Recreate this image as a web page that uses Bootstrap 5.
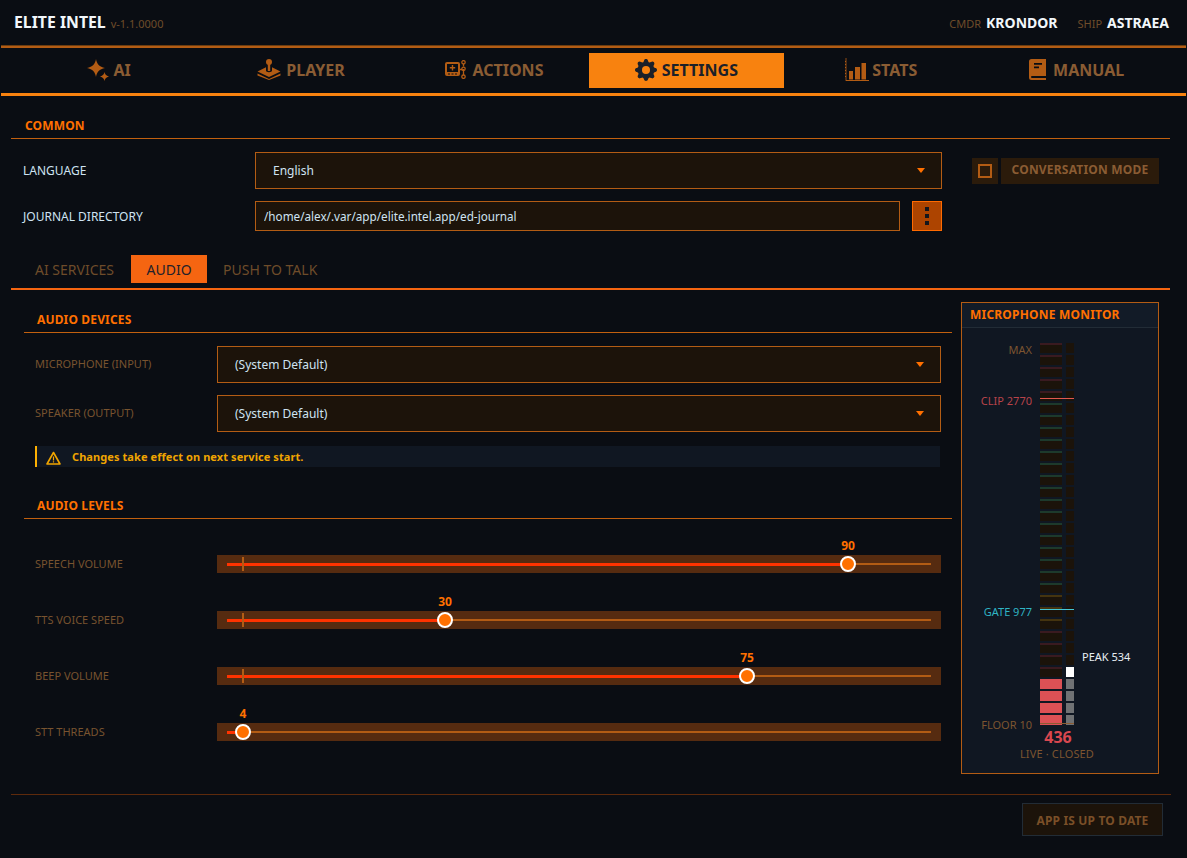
<!DOCTYPE html>
<html lang="en">
<head>
  <meta charset="UTF-8">
  <meta name="viewport" content="width=device-width, initial-scale=1.0">
  <title>Elite Intel</title>

  <!-- Bootstrap CSS -->
  <link href="https://cdn.jsdelivr.net/npm/bootstrap@5.3.0/dist/css/bootstrap.min.css" rel="stylesheet">

  <style>
    html, body { height: 100%; }
    body {
      background: #0a0d13;
      color: #cfe3f2;
      font-family: "Noto Sans", "Liberation Sans", sans-serif;
      font-size: 12px;
      padding: 0 1px;
      overflow: hidden;
    }

    /* top strip */
    .app-head { height: 46px; padding: 0 17px 0 13px; border-bottom: 1px solid #6b3c10; }
    .app-title { font-size: 15.8px; font-weight: 700; color: #f2f7fb; }
    .app-ver { font-size: 11px; color: #6e4c2a; margin-left: 5px; }
    .head-key { font-size: 11px; color: #6e4c2a; margin-right: 5px; }
    .head-val { font-size: 14px; font-weight: 700; color: #f2f7fb; }
    .head-gap { margin-left: 20px; }

    /* main tabs */
    .main-tabs {
      display: grid;
      grid-template-columns: repeat(6, 193.4px);
      padding: 5px 0 5px 10px;
      height: 50px;
      border-top: 2px solid #b35c14;
      border-bottom: 3px solid #f8820f;
    }
    .main-tab {
      display: flex; align-items: center; justify-content: center; gap: 5px;
      height: 35px;
      padding-bottom: 2px;
      font-size: 16px; font-weight: 700;
      color: #8a5c33;
    }
    .main-tab svg { fill: #b35c14; flex: none; }
    .main-tab.is-on { background: #f8820f; color: #1b2029; margin: 0 1px 0 -2px; }
    .main-tab.is-on svg { fill: #1b2029; }
    .tab-ai { padding-left: 2px; }
    .tab-actions { gap: 6px; }
    .tab-stats { gap: 3px; }
    .tab-manual { gap: 7px; padding-left: 4px; }

    /* section headings */
    .sect-head {
      font-size: 12px; font-weight: 700; color: #ff7000; letter-spacing: .15px;
      border-bottom: 1px solid #c2600f;
      line-height: 17px;
    }
    .common-head { margin: 21px 0 0 0; padding: 0 0 4px 14px; }
    .sub-head { margin-left: 13px; padding: 0 0 4px 13px; }

    .wrap-page { padding-left: 10px; padding-right: 16px; }

    .row-label { color: #cfe3f2; }
    .dim-label { font-size: 11px; color: #78532f; }

    .fld {
      background-color: #1c130a;
      border: 1px solid #b35c14;
      border-radius: 0;
      color: #cfe3f2;
      font-size: 12px;
      box-shadow: none;
    }
    select.fld {
      appearance: none;
      padding: 0 0 0 17px;
      background-image: url("data:image/svg+xml,%3Csvg xmlns='http://www.w3.org/2000/svg' width='10' height='6'%3E%3Cpath d='M1 0h8L5 5z' fill='%23ff7000'/%3E%3C/svg%3E");
      background-repeat: no-repeat;
      background-position: right 15px center;
      background-size: 10px 6px;
    }
    input.fld { padding: 0 8px; font-size: 11.7px; }
    input.fld:focus, select.fld:focus { background-color: #1c130a; color: #cfe3f2; border-color: #b35c14; box-shadow: none; outline: 0; }

    .common-row { margin-left: 12px; }
    .lang-row { margin-top: 13px; }
    .dir-row { margin-top: 12px; }
    .lang-select { width: 687px; height: 37px; }
    .dir-input { width: 645px; height: 30px; }
    .common-label { width: 232px; flex: none; }
    .label-down { padding-top: 2px; }
    .dots-btn {
      width: 30px; height: 30px; margin-left: 12px; padding: 0;
      background: #ad4400; border: 1px solid #ff6a00; border-radius: 0;
      display: flex; flex-direction: column; align-items: center; justify-content: center; gap: 3px;
    }
    .dots-btn i { width: 4px; height: 4px; background: #14161c; display: block; }
    .conv-check {
      width: 26px; height: 26px; margin-left: 30px; background: #2b1b0b;
      display: flex; align-items: center; justify-content: center;
    }
    .conv-check i { width: 14px; height: 14px; border: 2px solid #b35c14; display: block; }
    .conv-btn {
      width: 158px; height: 26px; margin-left: 3px; padding: 0 0 2px;
      background: #2b1b0b; border: 0; border-radius: 0;
      color: #8a5c33; font-size: 12px; font-weight: 700; letter-spacing: .2px;
    }

    /* sub tabs */
    .sub-tabs { height: 37px; margin-top: 22px; padding: 2px 0 5px 14px; border-bottom: 2px solid #f56511; }
    .sub-tab { height: 28px; padding: 0 10px; font-size: 14px; color: #6e4c2a; display: flex; align-items: center; margin-right: 7px; }
    .sub-tab.is-on { background: #f56511; color: #22212a; padding: 0 15.5px; margin-right: 6px; }

    .left-col { width: 941px; flex: none; }

    .dev-row { margin-left: 24px; width: 906px; }
    .dev-label { width: 182px; flex: none; }
    .dev-row select { height: 37px; }

    .warn-strip {
      margin-left: 24px; margin-top: 14px; width: 905px; height: 21px;
      background: #101722;
      border-left: 2px solid #fdb002;
      padding: 2px 0 0 9px;
      color: #f0a500; font-size: 11px; font-weight: 700; letter-spacing: .08px;
    }

    /* sliders */
    .lvl-row { margin-left: 24px; width: 906px; height: 18px; margin-bottom: 38px; }
    .lvl-band { position: relative; width: 724px; height: 18px; background: #562b10; }
    .lvl-track { position: absolute; left: 10px; right: 10px; top: 8px; height: 2px; background: #b35c14; }
    .lvl-fill { position: absolute; left: 10px; top: 8px; height: 3px; background: #ff3300; }
    .lvl-tick { position: absolute; left: 25px; top: 2px; width: 2px; height: 14px; background: #b35c14; }
    .lvl-thumb {
      position: absolute; top: 1px; width: 16px; height: 16px; margin-left: -8px;
      border-radius: 50%; background: #ff7000; border: 2px solid #fff;
    }
    .lvl-val {
      position: absolute; top: -17px; width: 30px; margin-left: -15px; text-align: center;
      font-size: 12px; font-weight: 700; color: #ff7000; line-height: 16px;
    }

    /* mic monitor */
    .mon-panel {
      width: 198px; height: 472px; margin-left: 9px; margin-top: 12px;
      background: #101722; border: 1px solid #b35c14;
    }
    .mon-head {
      height: 25px; padding-left: 8px; background: #121b27;
      border-bottom: 1px solid #222c36;
      font-size: 12px; font-weight: 700; color: #ff7000; letter-spacing: .2px;
      display: flex; align-items: center;
    }
    .mtr-wrap { position: relative; margin: 15px 0 0 78px; width: 34px; height: 382px; display: flex; flex-direction: column; gap: 2px; }
    .mtr-seg { display: flex; height: 10px; gap: 4px; }
    .mtr-a { width: 22px; background: #1b130a; border-top: 2px solid transparent; }
    .mtr-b { width: 8px; background: #1b130a; }
    .mtr-line { position: absolute; left: 0; width: 34px; height: 1px; }
    .mtr-lab { position: absolute; right: 42px; font-size: 11px; line-height: 14px; white-space: nowrap; }
    .mtr-peak { position: absolute; left: 42px; top: 307px; color: #e8eef2; font-size: 11px; line-height: 14px; white-space: nowrap; }
    .mon-num { padding-right: 4px; text-align: center; font-size: 16px; font-weight: 700; color: #d9474f; line-height: 20px; margin-top: 2px; }
    .mon-state { padding-right: 6px; text-align: center; font-size: 11px; letter-spacing: .15px; color: #7d5530; line-height: 14px; }

    /* foot */
    .foot-line { border-top: 1px solid #5e2a0c; margin: 15px -1px 0 0; }
    .upd-btn {
      width: 141px; height: 33px; padding: 2px 0 0; margin: 8px 7px 0 0;
      background: #1c130a; border: 1px solid #222c36; border-radius: 0;
      color: #7a4f28; font-size: 12px; font-weight: 700; letter-spacing: .15px;
    }
  </style>
</head>
<body>

  <!-- Title strip -->
  <header class="app-head d-flex align-items-center justify-content-between">
    <div class="d-flex align-items-baseline">
      <span class="app-title">ELITE INTEL</span>
      <span class="app-ver">v-1.1.0000</span>
    </div>
    <div class="d-flex align-items-baseline">
      <span class="head-key">CMDR</span><span class="head-val">KRONDOR</span>
      <span class="head-key head-gap">SHIP</span><span class="head-val">ASTRAEA</span>
    </div>
  </header>

  <!-- Main tabs -->
  <nav class="main-tabs">
    <div class="main-tab tab-ai">
      <svg width="22" height="22" viewBox="0 0 22 22"><path d="M9 0c.8 5 3.4 7.7 9 9-5.6 1.3-8.2 4-9 9-.8-5-3.4-7.7-9-9 5.6-1.3 8.2-4 9-9z"/><path d="M17.5 13c.4 2.3 1.500 3.500 4.500 4.500-3 1-4.100 2.200-4.500 4.500-.4-2.300-1.500-3.500-4.500-4.500 3-1 4.100-2.200 4.500-4.500z"/></svg>
      AI
    </div>
    <div class="main-tab">
      <svg width="24" height="21" viewBox="0 0 24 21"><circle cx="12" cy="3" r="3"/><rect x="10.8" y="5" width="2.4" height="7"/><path d="M9 8.3v3.2c0 1 1.3 1.7 3 1.7s3-.7 3-1.7V8.3l8.500 4.200L12 18 .5 12.500z"/><path d="M.5 14.500l11.500 5.500 11.500-5.500v2L12 21 .5 16.500z"/></svg>
      PLAYER
    </div>
    <div class="main-tab tab-actions">
      <svg width="21" height="19" viewBox="0 0 21 19"><path fill-rule="evenodd" d="M2 2h11a2 2 0 0 1 2 2v10a2 2 0 0 1-2 2H2a2 2 0 0 1-2-2V4a2 2 0 0 1 2-2zm0 2v8h11V4zm1 9.500v1h2v-1zm3.500 0v1h2v-1zm3.500 0v1h2v-1z"/><path d="M6.800 5h1.400v2h2v1.400h-2v2H6.800v-2h-2V7h2z"/><path fill="none" stroke="#b35c14" stroke-width="1.300" d="M18.500 4v2.500M18.500 9v6M15 9.500h2.500"/><circle cx="18.500" cy="2.300" r="1.700" fill="none" stroke="#b35c14" stroke-width="1.300"/><circle cx="18.500" cy="8.800" r="1.700" fill="none" stroke="#b35c14" stroke-width="1.300"/><circle cx="18.500" cy="16.700" r="1.700" fill="none" stroke="#b35c14" stroke-width="1.300"/></svg>
      ACTIONS
    </div>
    <div class="main-tab is-on">
      <svg width="22" height="22" viewBox="0 0 16 16"><path d="M9.405 1.050c-.413-1.400-2.397-1.400-2.810 0l-.1.340a1.464 1.464 0 0 1-2.105.872l-.31-.17c-1.283-.698-2.686.705-1.987 1.987l.169.311c.446.820.023 1.841-.872 2.105l-.34.100c-1.400.413-1.400 2.397 0 2.810l.34.100a1.464 1.464 0 0 1 .872 2.105l-.17.310c-.698 1.283.705 2.686 1.987 1.987l.311-.169a1.464 1.464 0 0 1 2.105.872l.1.340c.413 1.400 2.397 1.400 2.810 0l.1-.340a1.464 1.464 0 0 1 2.105-.872l.31.170c1.283.698 2.686-.705 1.987-1.987l-.169-.311a1.464 1.464 0 0 1 .872-2.105l.34-.100c1.400-.413 1.400-2.397 0-2.810l-.34-.100a1.464 1.464 0 0 1-.872-2.105l.17-.310c.698-1.283-.705-2.686-1.987-1.987l-.311.169a1.464 1.464 0 0 1-2.105-.872l-.1-.340zM8 10.930a2.929 2.929 0 1 1 0-5.860 2.929 2.929 0 0 1 0 5.858z"/></svg>
      SETTINGS
    </div>
    <div class="main-tab tab-stats">
      <svg width="24" height="23" viewBox="0 0 24 23"><path d="M.6 0h.8v22H24v1H.6z"/><path d="M0 3h1v1H0zM0 6h1v1H0zM0 9h1v1H0zM0 12h1v1H0zM0 15h1v1H0zM0 18h1v1H0z"/><path d="M4 13h4v8.500H4zM10 9h5v12.500h-5zM16.500 5H21v16.500h-4.500z"/></svg>
      STATS
    </div>
    <div class="main-tab tab-manual">
      <svg width="17" height="21" viewBox="0 0 17 21"><path fill-rule="evenodd" d="M2.500 0H17v17H3a1 1 0 0 0 0 2h14v2H2.500A2.500 2.500 0 0 1 0 18.500v-16A2.500 2.500 0 0 1 2.500 0zM5 4v1.800h8V4zm0 3.500v1.800h5V7.500z"/></svg>
      MANUAL
    </div>
  </nav>

  <div class="wrap-page">
    <!-- Common settings -->
    <div class="sect-head common-head">COMMON</div>

    <div class="common-row lang-row d-flex align-items-center">
      <span class="common-label row-label">LANGUAGE</span>
      <select class="fld lang-select"><option>English</option></select>
      <span class="conv-check"><i></i></span>
      <button class="conv-btn" type="button">CONVERSATION MODE</button>
    </div>
    <div class="common-row dir-row d-flex align-items-center">
      <span class="common-label row-label label-down">JOURNAL DIRECTORY</span>
      <input class="fld dir-input" value="/home/alex/.var/app/elite.intel.app/ed-journal">
      <button class="dots-btn" type="button"><i></i><i></i><i></i></button>
    </div>

    <div class="sub-tabs d-flex align-items-start">
      <div class="sub-tab">AI SERVICES</div>
      <div class="sub-tab is-on">AUDIO</div>
      <div class="sub-tab">PUSH TO TALK</div>
    </div>

    <div class="d-flex align-items-start">
      <div class="left-col">
        <div class="sect-head sub-head" style="margin-top:21px">AUDIO DEVICES</div>

        <div class="dev-row d-flex align-items-center" style="margin-top:13px">
          <span class="dev-label dim-label">MICROPHONE (INPUT)</span>
          <select class="fld flex-grow-1"><option>(System Default)</option></select>
        </div>
        <div class="dev-row d-flex align-items-center" style="margin-top:12px">
          <span class="dev-label dim-label">SPEAKER (OUTPUT)</span>
          <select class="fld flex-grow-1"><option>(System Default)</option></select>
        </div>

        <div class="warn-strip d-flex align-items-center gap-2">
          <svg width="15" height="14" viewBox="0 0 15 14"><path d="M7.500 1.500L1 13h13z" fill="none" stroke="#f0a500" stroke-width="1.600" stroke-linejoin="round"/><path d="M6.900 5.500h1.200v4H6.900zM6.900 10.300h1.200v1.200H6.900z" fill="#f0a500"/></svg>
          <span style="margin-left:3px">Changes take effect on next service start.</span>
        </div>

        <div class="sect-head sub-head" style="margin-top:30px;margin-bottom:36px">AUDIO LEVELS</div>

        <div id="levels"></div>
      </div>

      <!-- Microphone meter -->
      <aside class="mon-panel">
        <div class="mon-head">MICROPHONE MONITOR</div>
        <div class="mtr-wrap" id="meter"></div>
        <div class="mon-num">436</div>
        <div class="mon-state">LIVE · CLOSED</div>
      </aside>
    </div>

    <div class="foot-line"></div>
    <div class="d-flex justify-content-end">
      <button class="upd-btn" type="button">APP IS UP TO DATE</button>
    </div>
  </div>

  <!-- Bootstrap JS -->
  <script src="https://cdn.jsdelivr.net/npm/bootstrap@5.3.0/dist/js/bootstrap.bundle.min.js"></script>

  <script>
    // Audio level sliders, x is the thumb position inside the band
    const levels = [
      { name: 'SPEECH VOLUME', value: 90, x: 631 },
      { name: 'TTS VOICE SPEED', value: 30, x: 228 },
      { name: 'BEEP VOLUME', value: 75, x: 530 },
      { name: 'STT THREADS', value: 4, x: 26 }
    ];

    document.getElementById('levels').innerHTML = levels.map(l => `
      <div class="lvl-row d-flex align-items-center">
        <span class="dev-label dim-label">${l.name}</span>
        <div class="lvl-band">
          <div class="lvl-track"></div>
          <div class="lvl-fill" style="width:${l.x - 10}px"></div>
          <div class="lvl-tick"></div>
          <div class="lvl-thumb" style="left:${l.x}px"></div>
          <div class="lvl-val" style="left:${l.x}px">${l.value}</div>
        </div>
      </div>`).join('');

    // Meter segments, top to bottom
    const meter = document.getElementById('meter');
    let html = '';
    for (let i = 0; i < 32; i++) {
      let top = '#3a1a20';
      if (i >= 5 && i <= 20) top = '#1d3a2c';
      if (i >= 21 && i <= 23) top = '#45340f';
      let a = `border-top-color:${top}`;
      let b = '';
      if (i >= 28) { a = 'background:#dc5155;border-top-color:#dc5155'; b = 'background:#707274'; }
      if (i === 27) b = 'background:#fff';
      html += `<div class="mtr-seg"><div class="mtr-a" style="${a}"></div><div class="mtr-b" style="${b}"></div></div>`;
    }
    // Threshold lines and their labels lie over the segments
    html += `
      <div class="mtr-lab" style="top:0;color:#7d5530">MAX</div>
      <div class="mtr-line" style="top:55px;background:#e2584f"></div>
      <div class="mtr-lab" style="top:51px;color:#b8434a">CLIP 2770</div>
      <div class="mtr-line" style="top:266px;background:#46c8d6"></div>
      <div class="mtr-lab" style="top:262px;color:#2fb4c4">GATE 977</div>
      <div class="mtr-line" style="top:380px;background:#8a5c33"></div>
      <div class="mtr-lab" style="top:375px;color:#7d5530">FLOOR 10</div>
      <div class="mtr-peak">PEAK 534</div>`;
    meter.innerHTML = html;
  </script>

</body>
</html>
